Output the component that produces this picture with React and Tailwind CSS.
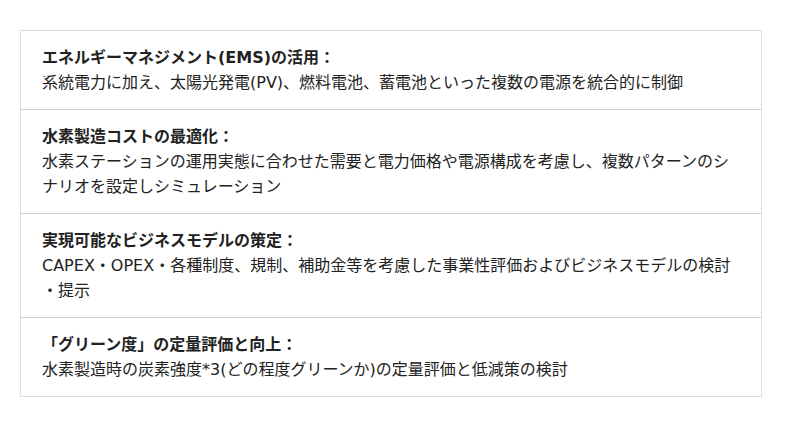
import React from "react";

const items = [
  {
    title: "エネルギーマネジメント(EMS)の活用：",
    body: ["系統電力に加え、太陽光発電(PV)、燃料電池、蓄電池といった複数の電源を統合的に制御"],
  },
  {
    title: "水素製造コストの最適化：",
    body: ["水素ステーションの運用実態に合わせた需要と電力価格や電源構成を考慮し、複数パターンのシナリオを設定しシミュレーション"],
  },
  {
    title: "実現可能なビジネスモデルの策定：",
    body: ["CAPEX・OPEX・各種制度、規制、補助金等を考慮した事業性評価およびビジネスモデルの検討", "・提示"],
  },
  {
    title: "「グリーン度」の定量評価と向上：",
    body: ["水素製造時の炭素強度*3(どの程度グリーンか)の定量評価と低減策の検討"],
  },
];

export default function App() {
  return (
    <div
      className="w-[800px] h-[427px] bg-white pt-[30px] pl-[20px]"
      style={{ fontFamily: '"DejaVu Sans", "Noto Sans CJK JP", sans-serif' }}
    >
      <div className="w-[742px] border border-[#dedede] flex flex-col">
        {items.map((it, i) => (
          <div
            key={i}
            className={
              "px-[21px] py-[14px] text-[16px] leading-[25px] text-[#222] " +
              (i > 0 ? "border-t border-[#cccccc]" : "")
            }
          >
            <div className="font-bold">{it.title}</div>
            <div>
              {it.body.map((b, j) => (
                <React.Fragment key={j}>
                  {j > 0 && <br />}
                  {b}
                </React.Fragment>
              ))}
            </div>
          </div>
        ))}
      </div>
    </div>
  );
}
